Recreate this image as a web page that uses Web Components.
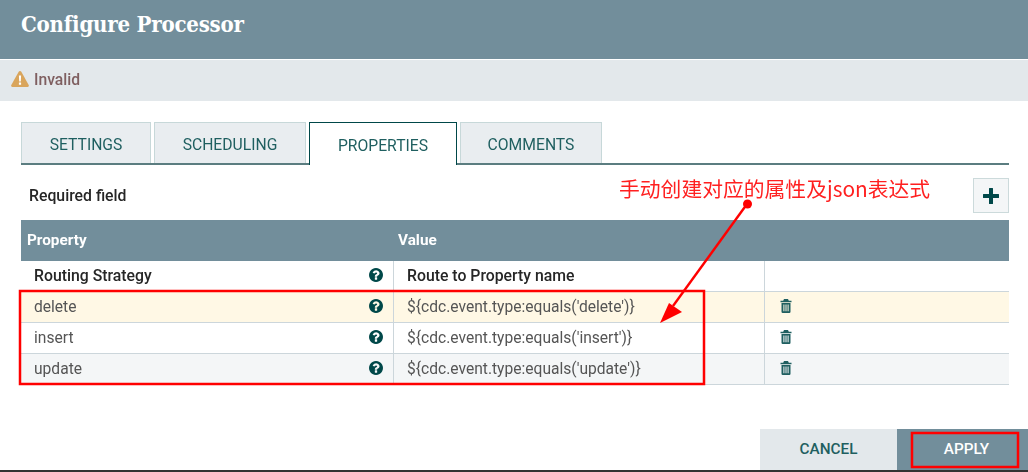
<!DOCTYPE html>
<html lang="en">
<head>
<meta charset="utf-8">
<title>Configure Processor</title>
<style>
  html, body { margin: 0; padding: 0; background: #fff; }
  body { width: 1028px; height: 472px; overflow: hidden; font-family: Roboto, "Liberation Sans", sans-serif; }
</style>
</head>
<body>
<processor-dialog></processor-dialog>

<script>
const ICONS = {
  help: `<svg viewBox="0 128 1536 1536" width="14" height="14" fill="#004849"><path d="M896 1376v-192q0-14-9-23t-23-9h-192q-14 0-23 9t-9 23v192q0 14 9 23t23 9h192q14 0 23-9t9-23zm256-672q0-88-55.5-163t-138.5-116-170-41q-243 0-371 213-15 24 8 42l132 100q7 6 19 6 16 0 25-12 53-68 86-92 34-24 86-24 48 0 85.5 26t37.5 59q0 38-20 61t-68 45q-63 28-115.5 86.5t-52.5 125.5v36q0 14 9 23t23 9h192q14 0 23-9t9-23q0-19 21.5-49.5t54.5-49.5q32-18 49-28.5t46-35 44.5-48 28-60.5 12.5-81zm384 192q0 209-103 385.5t-279.5 279.5-385.5 103-385.5-103-279.5-279.5-103-385.5 103-385.5 279.5-279.5 385.5-103 385.5 103 279.5 279.5 103 385.5z"/></svg>`,
  trash: `<svg viewBox="0 0 12 13" width="12" height="14" preserveAspectRatio="none" fill="#1f5f60"><path fill-rule="evenodd" d="M4 0h4l.8 1.600H11.500v1.400H.5V1.600h2.700zM1.500 3.600h9v8.200q0 1.200-1.200 1.200H2.700q-1.200 0-1.200-1.200zM3.400 5v6.400h1V5zm2.100 0v6.400h1V5zm2.100 0v6.400h1V5z"/></svg>`,
  warning: `<svg viewBox="0 0 18 16" width="18" height="16"><path fill="#d9a55c" d="M9 0q.8 0 1.300.8l7.400 13.200q.7 1.600-1 2H1.300q-1.700-.4-1-2L7.700.8Q8.200 0 9 0z"/><path fill="#fff" d="M7.900 4.600h2.200l-.3 6h-1.600zM7.900 11.600h2.200v2.200H7.900z"/></svg>`,
  plus: `<svg viewBox="0 0 16 16" width="16" height="16" fill="#004849"><path d="M6 .5q0-.5.5-.5h3q.5 0 .5.5V6h5.500q.5 0 .5.5v3q0 .5-.5.5H10v5.500q0 .5-.5.5h-3q-.5 0-.5-.5V10H.5Q0 10 0 9.500v-3Q0 6 .5 6H6z"/></svg>`
};

class DialogHeader extends HTMLElement {
  constructor() {
    super();
    this.attachShadow({ mode: 'open' });
    this.shadowRoot.innerHTML = `
      <style>
        :host {
          display: flex;
          align-items: center;
          height: 59px;
          padding: 0 0 11px 21px;
          box-sizing: border-box;
          background: #728e9b;
          color: #fff;
          font: bold 22px "DejaVu Serif Condensed", "DejaVu Serif", serif;
          letter-spacing: -0.2px;
        }
      </style>
      <slot></slot>
    `;
  }
}
customElements.define('dialog-header', DialogHeader);

class StatusBar extends HTMLElement {
  constructor() {
    super();
    this.attachShadow({ mode: 'open' });
    this.shadowRoot.innerHTML = `
      <style>
        :host {
          display: flex;
          align-items: center;
          gap: 5px;
          height: 41px;
          margin-top: 1px;
          padding: 0 0 2px 11px;
          box-sizing: border-box;
          background: #e3e8eb;
          color: #7f5f60;
          font: 500 15.7px Roboto, sans-serif;
        }
        .icon { display: flex; margin-top: -1px; }
      </style>
      <span class="icon">${ICONS.warning}</span>
      <slot></slot>
    `;
  }
}
customElements.define('status-bar', StatusBar);

class TabBar extends HTMLElement {
  constructor() {
    super();
    this.attachShadow({ mode: 'open' });
    this.shadowRoot.innerHTML = `
      <style>
        :host {
          display: flex;
          gap: 3px;
          height: 43px;
          margin: 21px 19px 0 21px;
          box-sizing: border-box;
          border-bottom: 2px solid #5b7d80;
        }
      </style>
      <slot></slot>
    `;
  }
}
customElements.define('tab-bar', TabBar);

class TabItem extends HTMLElement {
  constructor() {
    super();
    this.attachShadow({ mode: 'open' });
    this.shadowRoot.innerHTML = `
      <style>
        :host {
          display: flex;
          align-items: center;
          justify-content: center;
          height: 41px;
          box-sizing: border-box;
          padding-top: 2px;
          background: #e9edf0;
          border: 1px solid #c7d8d9;
          border-bottom: 0;
          color: #1f5f60;
          font: 400 15.7px Roboto, sans-serif;
        }
        :host([active]) {
          height: 43px;
          background: #fff;
          border: 1px solid #004849;
          border-bottom: 0;
        }
      </style>
      <slot></slot>
    `;
  }
}
customElements.define('tab-item', TabItem);

class PropertyToolbar extends HTMLElement {
  constructor() {
    super();
    this.attachShadow({ mode: 'open' });
    this.shadowRoot.innerHTML = `
      <style>
        :host {
          display: flex;
          align-items: center;
          justify-content: space-between;
          height: 35px;
          margin: 13px 19px 7px 21px;
          padding-left: 8px;
          color: #262626;
          font: 500 15.8px Roboto, sans-serif;
        }
        .add {
          display: flex;
          align-items: center;
          justify-content: center;
          width: 36px;
          height: 35px;
          box-sizing: border-box;
          background: #f4f6f7;
          border: 1px solid #ccdadb;
        }
      </style>
      <span><slot></slot></span>
      <span class="add">${ICONS.plus}</span>
    `;
  }
}
customElements.define('property-toolbar', PropertyToolbar);

class PropertyTable extends HTMLElement {
  constructor() {
    super();
    this.attachShadow({ mode: 'open' });
    this.shadowRoot.innerHTML = `
      <style>
        :host {
          display: block;
          margin: 0 19px 0 21px;
        }
        .head {
          display: grid;
          grid-template-columns: 373px 1fr;
          align-items: center;
          height: 41px;
          padding-bottom: 1px;
          box-sizing: border-box;
          background: #728e9b;
          color: #fff;
          font: 700 15.3px Roboto, sans-serif;
        }
        .head span { padding-left: 6px; }
        .head span + span { padding-left: 4px; }
      </style>
      <div class="head"><span>Property</span><span>Value</span></div>
      <slot></slot>
    `;
  }
}
customElements.define('property-table', PropertyTable);

class PropertyRow extends HTMLElement {
  constructor() {
    super();
    this.attachShadow({ mode: 'open' });
    const removable = this.hasAttribute('removable');
    this.shadowRoot.innerHTML = `
      <style>
        :host {
          display: grid;
          grid-template-columns: 373px 371px 1fr;
          height: 31px;
          box-sizing: border-box;
          border-bottom: 1px solid #ccd6db;
          background: #fff;
          color: #555;
          font: 400 15.6px Roboto, sans-serif;
        }
        :host([required]) { color: #262626; font-weight: 500; font-size: 15.8px; }
        :host([tone="new"]) { background: #fff8e5; }
        :host([tone="alt"]) { background: #f4f6f7; }
        :host(:not([required])) ::slotted(span) { padding-top: 2px; }
        .cell {
          display: flex;
          align-items: center;
          box-sizing: border-box;
          padding-bottom: 2px;
          border-right: 1px solid #ccd6db;
        }
        .name { padding-left: 13px; padding-right: 10px; justify-content: space-between; }
        .value { padding-left: 13px; }
        .remove { padding-left: 15px; border-right: 0; }
        svg { display: block; }
      </style>
      <div class="cell name"><slot name="name"></slot>${ICONS.help}</div>
      <div class="cell value"><slot name="value"></slot></div>
      <div class="cell remove">${removable ? ICONS.trash : ''}</div>
    `;
  }
}
customElements.define('property-row', PropertyRow);

class DialogActions extends HTMLElement {
  constructor() {
    super();
    this.attachShadow({ mode: 'open' });
    this.shadowRoot.innerHTML = `
      <style>
        :host {
          display: flex;
          justify-content: flex-end;
          margin-top: 44px;
          height: 41px;
        }
      </style>
      <slot></slot>
    `;
  }
}
customElements.define('dialog-actions', DialogActions);

class ActionButton extends HTMLElement {
  constructor() {
    super();
    this.attachShadow({ mode: 'open' });
    this.shadowRoot.innerHTML = `
      <style>
        :host {
          display: flex;
          align-items: center;
          justify-content: center;
          box-sizing: border-box;
          width: 137px;
          padding-bottom: 2px;
          background: #e3e8eb;
          color: #1f5f60;
          font: 500 15.3px Roboto, sans-serif;
        }
        :host([primary]) {
          width: 131px;
          padding-left: 8px;
          background: #728e9b;
          color: #fff;
        }
      </style>
      <slot></slot>
    `;
  }
}
customElements.define('action-button', ActionButton);

// red marks somebody drew over the screenshot, they sit on a free canvas
class ScreenshotMarkup extends HTMLElement {
  constructor() {
    super();
    this.attachShadow({ mode: 'open' });
    this.shadowRoot.innerHTML = `
      <style>
        :host {
          display: block;
          position: absolute;
          inset: 0;
          pointer-events: none;
        }
        .note {
          position: absolute;
          left: 619px;
          top: 176px;
          color: #ff2020;
          font: 400 20.8px/24px "Noto Sans CJK SC", "Liberation Sans", sans-serif;
          white-space: nowrap;
        }
        svg { position: absolute; inset: 0; }
      </style>
      <span class="note">手动创建对应的属性及json表达式</span>
      <svg width="1028" height="472" viewBox="0 0 1028 472" fill="none">
        <rect x="20" y="291" width="684" height="93" stroke="#f00" stroke-width="2.5"/>
        <rect x="912" y="433" width="106" height="34" stroke="#f00" stroke-width="2.5"/>
        <circle cx="747.5" cy="204" r="4.5" fill="#f00"/>
        <path d="M747 204 673 306" stroke="#f00" stroke-width="2.4"/>
        <path d="M660 323 669 303 682 312z" fill="#f00"/>
      </svg>
    `;
  }
}
customElements.define('screenshot-markup', ScreenshotMarkup);

class ProcessorDialog extends HTMLElement {
  constructor() {
    super();
    this.attachShadow({ mode: 'open' });
    this.shadowRoot.innerHTML = `
      <style>
        :host {
          display: block;
          position: relative;
          width: 1028px;
          height: 472px;
          overflow: hidden;
          box-sizing: border-box;
          border-bottom: 2px solid #333;
          filter: blur(0.35px);
        }
        .tab-settings { width: 130px; }
        .tab-scheduling { width: 152px; }
        .tab-properties { width: 148px; }
        .tab-comments { width: 142px; }
      </style>
      <dialog-header>Configure Processor</dialog-header>
      <status-bar>Invalid</status-bar>
      <tab-bar>
        <tab-item class="tab-settings">SETTINGS</tab-item>
        <tab-item class="tab-scheduling">SCHEDULING</tab-item>
        <tab-item class="tab-properties" active>PROPERTIES</tab-item>
        <tab-item class="tab-comments">COMMENTS</tab-item>
      </tab-bar>
      <property-toolbar>Required field</property-toolbar>
      <property-table>
        <property-row required>
          <span slot="name">Routing Strategy</span>
          <span slot="value">Route to Property name</span>
        </property-row>
        <property-row tone="new" removable>
          <span slot="name">delete</span>
          <span slot="value">\${cdc.event.type:equals('delete')}</span>
        </property-row>
        <property-row removable>
          <span slot="name">insert</span>
          <span slot="value">\${cdc.event.type:equals('insert')}</span>
        </property-row>
        <property-row tone="alt" removable>
          <span slot="name">update</span>
          <span slot="value">\${cdc.event.type:equals('update')}</span>
        </property-row>
      </property-table>
      <dialog-actions>
        <action-button>CANCEL</action-button>
        <action-button primary>APPLY</action-button>
      </dialog-actions>
      <screenshot-markup></screenshot-markup>
    `;
  }
}
customElements.define('processor-dialog', ProcessorDialog);
</script>
</body>
</html>
